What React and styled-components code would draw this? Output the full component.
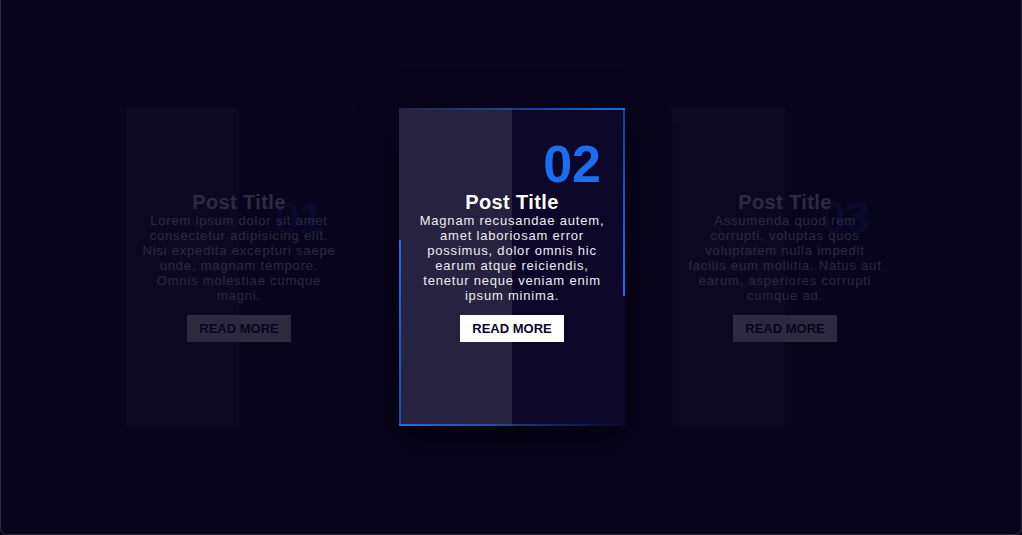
import React from 'react';
import styled, { createGlobalStyle, css } from 'styled-components';

const GlobalStyle = createGlobalStyle`
  html, body {
    margin: 0;
    padding: 0;
    background: #08041d;
  }
  body {
    font-family: "Liberation Sans", Arial, sans-serif;
  }
`;

const blue = '#1a6ff0';

const Frame = styled.div`
  box-sizing: border-box;
  width: 1022px;
  height: 535px;
  padding-left: 2px;
  background: #08041d;
  border: 1px solid #2c2a3c;
  border-top: none;
  border-radius: 0 0 7px 7px;
  display: flex;
  align-items: center;
  justify-content: center;
  gap: 47px;
`;

const Card = styled.div`
  position: relative;
  width: 226px;
  height: 318px;
  display: flex;
  flex-shrink: 0;
  ${p =>
    p.$active
      ? css`
          box-shadow: 0 16px 36px rgba(0, 0, 0, 0.55);
        `
      : css`
          opacity: 0.15;
        `}
`;

const Half = styled.div`
  flex: 1;
  background: ${p => (p.$light ? '#27223f' : '#0c0629')};
`;

const Number = styled.div`
  position: absolute;
  right: ${p => (p.$active ? '24px' : '28px')};
  top: ${p => (p.$active ? '30px' : '88px')};
  font-size: ${p => (p.$active ? '52px' : '44px')};
  line-height: 1;
  font-weight: 700;
  color: ${blue};
  opacity: ${p => (p.$active ? 1 : 0.4)};
`;

const Content = styled.div`
  position: absolute;
  inset: 0;
  display: flex;
  flex-direction: column;
  align-items: center;
  justify-content: center;
  padding: 0 15px;
  text-align: center;
  color: #fff;
`;

const Title = styled.h2`
  margin: 0;
  font-size: 20px;
  line-height: 21px;
  font-weight: 700;
  letter-spacing: 0.4px;
  color: #fff;
`;

const Text = styled.p`
  margin: 0;
  font-size: 13px;
  line-height: 15px;
  letter-spacing: 0.8px;
  color: #eeecf4;
`;

const Button = styled.a`
  margin-top: 12px;
  display: inline-block;
  background: #fff;
  color: #0c0629;
  font-size: 13px;
  line-height: 15px;
  font-weight: 700;
  padding: 6px 12px;
  text-decoration: none;
`;

const Line = styled.span`
  position: absolute;
  ${p => p.$side === 'top' && css`
    top: 0;
    left: 0;
    width: 100%;
    height: 2px;
    background: linear-gradient(to right, transparent, ${blue});
  `}
  ${p => p.$side === 'right' && css`
    top: 0;
    right: 0;
    width: 2px;
    height: 188px;
    background: linear-gradient(to bottom, rgba(26, 111, 240, 0.55), ${blue});
  `}
  ${p => p.$side === 'bottom' && css`
    bottom: 0;
    left: 0;
    width: 100%;
    height: 2px;
    background: linear-gradient(to left, transparent, ${blue});
  `}
  ${p => p.$side === 'left' && css`
    bottom: 0;
    left: 0;
    width: 2px;
    height: 186px;
    background: linear-gradient(to top, rgba(26, 111, 240, 0.55), ${blue});
  `}
`;

const posts = [
  {
    num: '01',
    text: 'Lorem ipsum dolor sit amet consectetur adipisicing elit. Nisi expedita excepturi saepe unde, magnam tempore. Omnis molestiae cumque magni.',
  },
  {
    num: '02',
    active: true,
    text: 'Magnam recusandae autem, amet laboriosam error possimus, dolor omnis hic earum atque reiciendis, tenetur neque veniam enim ipsum minima.',
  },
  {
    num: '03',
    text: 'Assumenda quod rem corrupti, voluptas quos voluptatem nulla impedit facilis eum mollitia. Natus aut earum, asperiores corrupti cumque ad.',
  },
];

export default function App() {
  return (
    <>
      <GlobalStyle />
      <Frame>
        {posts.map(post => (
          <Card key={post.num} $active={post.active}>
            <Half $light />
            <Half />
            <Number $active={post.active}>{post.num}</Number>
            <Content>
              <Title>Post Title</Title>
              <Text>{post.text}</Text>
              <Button href="#">READ MORE</Button>
            </Content>
            {post.active && (
              <>
                <Line $side="top" />
                <Line $side="right" />
                <Line $side="bottom" />
                <Line $side="left" />
              </>
            )}
          </Card>
        ))}
      </Frame>
    </>
  );
}
